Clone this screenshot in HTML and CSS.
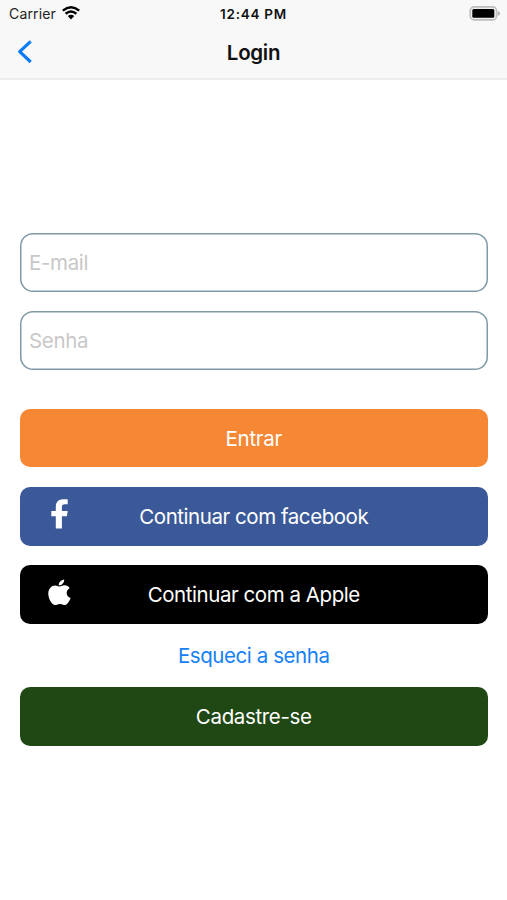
FILE: index.html
```html
<!DOCTYPE html>
<html lang="pt-BR">
<head>
<meta charset="utf-8">
<title>Login</title>
<link rel="stylesheet" href="styles.css">
</head>
<body>
<header class="header">
  <div class="status">
    <div class="carrier"><span>Carrier</span>
      <svg class="wifi" viewBox="0 0 18 14" width="18" height="14"><path d="M.8 4.600Q9-2 17.200 4.600M3.600 7.800Q9 3.300 14.400 7.800" fill="none" stroke="#000" stroke-width="2.500"/><path d="M5.800 10.100Q9 7.600 12.200 10.100L9 13.500z"/></svg>
    </div>
    <time class="time">12:44 PM</time>
    <svg class="battery" viewBox="0 0 32 15" width="32" height="15"><rect x="1.200" y=".9" width="26.400" height="13" rx="4" fill="#eee" stroke="#bdbdbd" stroke-width="1.600"/><rect x="3.300" y="3" width="22" height="8.800" rx="1.500"/><path d="M28.900 5q2 .6 2 2.400t-2 2.400z" fill="#aaa"/></svg>
  </div>
  <nav class="nav">
    <svg class="back" viewBox="0 0 16 24" width="16" height="24"><path d="M13.700 1.300 2.700 11.700l11 10.300" fill="none" stroke="#087bf5" stroke-width="3.200" stroke-linejoin="round"/></svg>
    <h1 class="title">Login</h1>
    <span></span>
  </nav>
</header>
<main class="form">
  <input class="field email" type="email" placeholder="E-mail" aria-label="E-mail">
  <input class="field senha" type="password" placeholder="Senha" aria-label="Senha">
  <button class="button enter"><span></span><span class="label">Entrar</span></button>
  <button class="button facebook">
    <svg viewBox="0 0 18 30" width="18" height="30"><path d="M5.800 29.500V17.200H1.300v-5.100h4.500V8.100Q5.800.3 13.100.3h4.600v5h-3.200q-2.600 0-2.600 2.600v4.200h5.800l-.8 5.100h-5v12.300z" fill="#fff"/></svg>
    <span class="label">Continuar com facebook</span>
  </button>
  <button class="button apple">
    <svg viewBox="0 0 23 28" width="23" height="28"><path d="M16.200.4c.2 3-2.400 6.100-5.400 6C10.500 3.400 13.200.700 16.200.4ZM11.600 7.600c1.100 0 2.500-1.300 5-1.300 1.900.1 3.900 1 5.100 2.600-4.500 2.700-3.700 8.600.9 10.100-.8 2.200-3 6.800-5.700 7-1.900.1-2.500-1.100-4.900-1.100s-3 1.100-4.800 1.100C3.800 25.800.3 19.600.3 14.700c0-5.100 3.300-8.300 6.800-8.300 2 0 3.300 1.200 4.500 1.200Z" fill="#fff"/></svg>
    <span class="label">Continuar com a Apple</span>
  </button>
  <a class="forgot" href="#">Esqueci a senha</a>
  <button class="button register"><span></span><span class="label">Cadastre-se</span></button>
</main>
</body>
</html>
```
FILE: styles.css
```css
* { box-sizing: border-box; }
body {
  margin: 0;
  min-height: 900px;
  background: #fff;
  font-family: Inter, "Liberation Sans", sans-serif;
  color: #000;
}
.header {
  height: 80px;
  background: #f8f8f8;
  border-bottom: 2px solid #ececec;
}
.status {
  display: grid;
  grid-template-columns: 1fr auto 1fr;
  align-items: center;
  height: 27px;
  padding: 0 6px 0 9px;
}
.carrier {
  display: flex;
  align-items: center;
  gap: 6px;
  font-size: 14px;
  letter-spacing: 0.15px;
  color: #222;
}
.wifi { margin-top: -2px; }
.time {
  margin-right: 3px;
  font-size: 13.5px;
  font-weight: 600;
  letter-spacing: 0.75px;
  color: #111;
}
.battery { justify-self: end; }
.nav {
  display: grid;
  grid-template-columns: 1fr auto 1fr;
  align-items: center;
  height: 50px;
  padding: 0 17px;
}
.title {
  margin: 0;
  font-size: 20.5px;
  font-weight: 600;
  letter-spacing: -0.3px;
  color: #111;
}
.form {
  display: flex;
  flex-direction: column;
  padding: 153px 19.5px 0 20px;
}
.field {
  height: 59px;
  margin: 0 0 19.3px;
  padding: 0 9px;
  border: 0;
  border-radius: 13px;
  box-shadow: inset 0 0 0 1.5px #7f99a5;
  background: #fff;
  font: 20.5px Inter, "Liberation Sans", sans-serif;
  letter-spacing: -0.35px;
  outline: none;
}
.field::placeholder { color: #c8c8c8; opacity: 1; }
.senha { margin-bottom: 38.5px; }
.button {
  display: grid;
  grid-template-columns: 78px 1fr 78px;
  align-items: center;
  justify-items: center;
  height: 58.7px;
  margin: 0 0 19.5px;
  padding: 0;
  border: 0;
  border-radius: 10px;
  color: #fff;
  font: 20.5px Inter, "Liberation Sans", sans-serif;
  letter-spacing: -0.45px;
  white-space: nowrap;
}
.button svg { margin-top: -4px; }
.enter { background: #f68735; letter-spacing: -0.3px; }
.facebook { background: #3b5998; }
.apple { background: #000; }
.register { background: #1f4814; margin: 0; letter-spacing: -0.35px; }
.forgot {
  align-self: center;
  height: 44px;
  line-height: 26px;
  color: #1680f5;
  font-size: 20.5px;
  letter-spacing: -0.43px;
  text-decoration: none;
}
```
